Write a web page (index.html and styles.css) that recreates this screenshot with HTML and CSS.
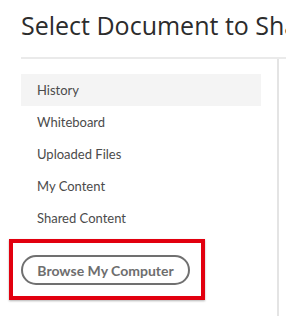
FILE: index.html
```html
<!DOCTYPE html>
<html lang="en">
<head>
  <meta charset="UTF-8">
  <meta name="viewport" content="width=device-width, initial-scale=1.0">
  <title>Select Document to Share</title>
  <link rel="stylesheet" href="styles.css">
</head>
<body>
  <div class="dialog">
    <!-- Header -->
    <h1 class="title">Select Document to Share</h1>

    <!-- Body -->
    <div class="content">
      <div class="sidebar">
        <ul class="nav">
          <li class="nav-item active">History</li>
          <li class="nav-item">Whiteboard</li>
          <li class="nav-item">Uploaded Files</li>
          <li class="nav-item">My Content</li>
          <li class="nav-item">Shared Content</li>
        </ul>
        <div class="callout">
          <button class="browse-btn">Browse My Computer</button>
        </div>
      </div>
      <div class="preview"></div>
    </div>
  </div>
</body>
</html>
```

FILE: styles.css
```css
body {
  margin: 0;
  padding: 0;
  background: #fff;
  font-family: Lato, "Open Sans", sans-serif;
  overflow: hidden;
}

.dialog {
  width: 265px;
  padding-left: 21px;
  overflow: hidden;
}

.title {
  margin: 0;
  padding-top: 10px;
  height: 57px;
  box-sizing: border-box;
  font-family: "Open Sans", sans-serif;
  font-size: 25px;
  font-weight: 400;
  color: #2c2c2c;
  white-space: nowrap;
  line-height: 30px;
}

.content {
  display: flex;
  width: 300px;
  border-top: 2px solid #eaeaea;
  height: 260px;
}

.sidebar {
  width: 240px;
  flex-shrink: 0;
  padding-top: 15px;
}

.preview {
  margin-left: 16px;
  border-left: 2px solid #e4e4e4;
  flex: 1;
}

.nav {
  list-style: none;
  margin: 0;
  padding: 0;
}

.nav-item {
  height: 32px;
  line-height: 32px;
  padding-left: 16px;
  font-size: 13px;
  color: #4b4b4b;
}

.nav-item.active {
  background: #f4f4f4;
}

.callout {
  width: 196px;
  box-sizing: border-box;
  margin: 5px 0 0 -12px;
  padding: 12px 0 11px 8px;
  border: 4px solid #e2000f;
  box-shadow: 0 1px 2px rgba(0, 0, 0, 0.3);
}

.browse-btn {
  display: block;
  width: 169px;
  height: 30px;
  padding: 0;
  border: 2px solid #707070;
  border-radius: 15px;
  background: #fff;
  color: #6e6e6e;
  font-family: Lato, "Open Sans", sans-serif;
  font-size: 14px;
  font-weight: 700;
  cursor: pointer;
}
```
